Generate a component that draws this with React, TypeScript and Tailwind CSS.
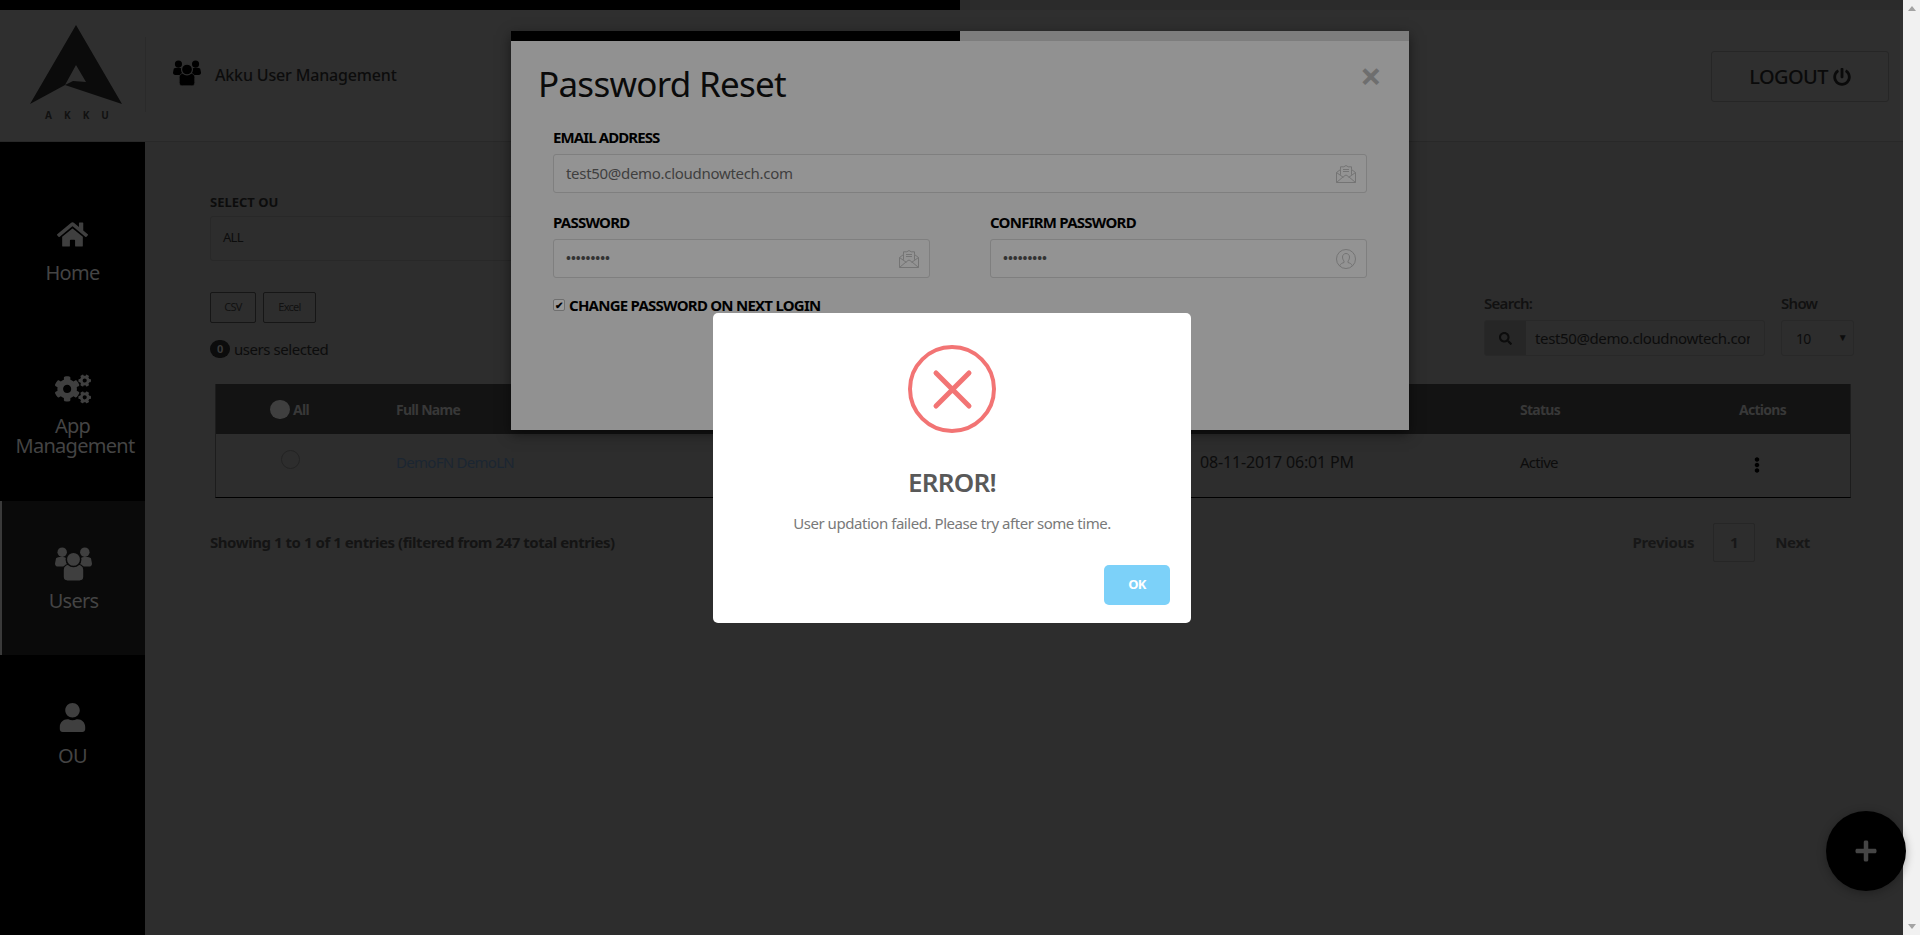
import { FaCogs, FaEllipsisV, FaHome, FaPlus, FaPowerOff, FaSearch, FaUser } from "react-icons/fa";

function UsersGlyph({ className, cut }: { className: string; cut: string }) {
  return (
    <svg viewBox="0 0 36 33" className={className} fill="currentColor">
      <circle cx="7" cy="5" r="4.6" />
      <circle cx="29" cy="5" r="4.6" />
      <path d="M1 11c1.500-1.600 9-1.600 10 0l1 8H3c-2 0-3-1-3-3z" />
      <path d="M35 11c-1.500-1.600-9-1.600-10 0l-1 8h9c2 0 3-1 3-3z" />
      <path d="M8 22c0-4 4-6 10-6s10 2 10 6v7c0 3-2 4-4 4H12c-2 0-4-1-4-4z" stroke={cut} strokeWidth="1" />
      <circle cx="18" cy="12" r="7" stroke={cut} strokeWidth="1.500" />
    </svg>
  );
}

function MailIcon() {
  return (
    <svg viewBox="0 0 20 18" className="h-[18px] w-[20px]" fill="none" stroke="#747474" strokeWidth="1">
      <path d="M.5 7.500v10h19v-10L15.500 4.500V1.800h-3.300L10 .5 7.800 1.800H4.500v2.700z" />
      <path d="M.5 7.500L7.500 12.500M19.500 7.500L12.500 12.500M.5 17.500L7.500 11.500 10 10l2.500 1.500 7 6M4.500 4.500V9.800M15.500 4.500V9.800M7 4.500h6M7 6.500h6" />
    </svg>
  );
}

function PersonIcon() {
  return (
    <svg viewBox="0 0 20 20" className="h-[20px] w-[20px]" fill="none" stroke="#747474" strokeWidth="1">
      <circle cx="10" cy="10" r="9.500" />
      <path d="M3.500 17c1-2.500 3-3 4.500-3.500v-1.500c-1-1-1.500-2.500-1.500-4 0-2 1.500-3.500 3.500-3.500s3.500 1.500 3.500 3.500c0 1.500-.5 3-1.500 4v1.500c1.500.5 3.500 1 4.500 3.500" />
    </svg>
  );
}

function NavItem({
  icon,
  label,
  active,
  height,
  shift = "",
  gap = "mt-[9px]",
}: {
  icon: React.ReactNode;
  label: React.ReactNode;
  active?: boolean;
  height: string;
  shift?: string;
  gap?: string;
}) {
  return (
    <div
      className={`flex flex-col items-center justify-center ${height} ${shift} ${
        active ? "border-l-2 border-[#3a3a3a] bg-[#0a0a0a]" : ""
      }`}
    >
      {icon}
      <div className={`${gap} text-center text-[20px] leading-[20px] text-[#444444]`}>{label}</div>
    </div>
  );
}

function ModalInput({ value, icon, secret }: { value: string; icon: React.ReactNode; secret?: boolean }) {
  return (
    <div className="flex h-[39px] items-center justify-between rounded-[3px] border border-[#7f7f7f] bg-[#939393] pl-[12px] pr-[10px]">
      <span className={secret ? "text-[13px] font-bold tracking-[0] text-[#333333]" : "text-[15px] tracking-[-0.02em] text-[#3f3f3f]"}>{value}</span>
      {icon}
    </div>
  );
}

export default function App() {
  return (
    <div className="relative flex h-[935px] w-[1920px] overflow-hidden bg-[#f1f1f1] font-['Noto_Sans','Open_Sans',sans-serif] tracking-[-0.045em]">
      {/* Page */}
      <div className="relative flex w-[1903px] flex-col bg-[#2d2d2d]">
        <div className="flex h-[10px] shrink-0">
          <div className="w-[960px] bg-black" />
          <div className="flex-1 bg-[#2b2b2b]" />
        </div>

        {/* Header */}
        <header className="flex h-[132px] shrink-0 items-start border-b border-[#282828] bg-[#2f2f2f]">
          <div className="flex h-[131px] w-[145px] flex-col items-center pt-[15px]">
            <svg viewBox="0 0 92 79" className="ml-[7px] h-[79px] w-[92px]">
              <path d="M46 0L92 79 35 60 0 79zM46 40L56 57 43 56 35 60z" fill="#0b0b0b" fillRule="evenodd" />
            </svg>
            <div className="ml-[7px] mt-[4px] pl-[14px] text-[10px] font-bold leading-[14px] tracking-[12px] text-[#111111]">AKKU</div>
          </div>
          <div className="mt-[27px] h-[75px] border-l border-[#2a2a2a]" />
          <div className="ml-[27px] mt-[50px] flex items-start">
            <UsersGlyph className="h-[26px] w-[28px] text-black" cut="#2f2f2f" />
            <span className="ml-[14px] mt-[3px] text-[16px] font-medium leading-[24px] tracking-[-0.01em] text-[#0c0c0c]">Akku User Management</span>
          </div>
          <button className="ml-auto mr-[14px] mt-[41px] flex h-[51px] w-[178px] items-center justify-center gap-[5px] rounded-[3px] border border-[#262626] text-[20px] font-medium tracking-[-0.03em] text-[#0a0a0a]">
            LOGOUT <FaPowerOff className="text-[18px]" />
          </button>
        </header>

        <div className="flex flex-1">
          {/* Sidebar */}
          <aside className="w-[145px] shrink-0 bg-black pt-[35px]">
            <NavItem
              height="h-[154px]"
              shift="pb-[6px]"
              gap="mt-[13px]"
              icon={<FaHome className="text-[31px] text-[#3f3f3f]" />}
              label="Home"
            />
            <NavItem
              height="h-[170px]"
              shift="pb-[5px]"
              icon={<FaCogs className="text-[36px] text-[#3f3f3f]" />}
              label={
                <>
                  App
                  <span className="ml-[5px] block">Management</span>
                </>
              }
            />
            <NavItem
              active
              height="h-[154px]"
              icon={<UsersGlyph className="h-[36px] w-[37px] text-[#3f3f3f]" cut="#0a0a0a" />}
              label="Users"
            />
            <NavItem
              height="h-[154px]"
              shift="pt-[5px]"
              gap="mt-[14px]"
              icon={<FaUser className="text-[29px] text-[#3f3f3f]" />}
              label="OU"
            />
          </aside>

          {/* Content */}
          <main className="min-w-0 flex-1 pl-[65px] pr-[49px] pt-[53px]">
            <div className="text-[13px] font-bold leading-[14px] tracking-[0] text-[#0c0c0c]">SELECT OU</div>
            <div className="mt-[7px] flex h-[45px] w-[560px] items-center rounded-[3px] border border-[#282828] pb-[2px] pl-[12px] text-[13px] text-[#0c0c0c]">ALL</div>

            <div className="mt-[31px] flex items-start justify-between">
              <div>
                <div className="flex gap-[7px]">
                  <button className="h-[31px] w-[46px] rounded-[2px] border border-[#161616] text-[11px] text-[#111111]">CSV</button>
                  <button className="h-[31px] w-[53px] rounded-[2px] border border-[#161616] text-[11px] text-[#111111]">Excel</button>
                </div>
                <div className="mt-[17px] flex items-center gap-[4px] text-[15px] leading-[18px] tracking-[-0.03em] text-[#0c0c0c]">
                  <span className="flex h-[18px] w-[20px] items-center justify-center rounded-full bg-[#0c0c0c] text-[11px] font-bold text-[#3a3a3a]">0</span>
                  users selected
                </div>
              </div>
              <div className="mr-[0px] mt-[1px] flex gap-[16px]">
                <div>
                  <div className="text-[15px] font-semibold leading-[20px] text-[#111111]">Search:</div>
                  <div className="mt-[7px] flex h-[36px] w-[281px] overflow-hidden rounded-[3px] border border-[#282828]">
                    <div className="flex w-[41px] items-center justify-center bg-[#262626]">
                      <FaSearch className="text-[13px] text-[#0c0c0c]" />
                    </div>
                    <div className="w-[224px] overflow-hidden whitespace-nowrap pl-[9px] text-[15px] leading-[34px] tracking-[-0.025em] text-[#0c0c0c]">test50@demo.cloudnowtech.com</div>
                  </div>
                </div>
                <div>
                  <div className="text-[15px] font-semibold leading-[20px] text-[#111111]">Show</div>
                  <div className="relative mt-[7px] flex h-[36px] w-[73px] items-center rounded-[3px] border border-[#282828] pl-[14px] text-[14px] text-[#0c0c0c]">
                    10
                    <span className="absolute right-[6px] top-[9px] text-[10px] text-[#0c0c0c]">▼</span>
                  </div>
                </div>
              </div>
            </div>

            {/* Table */}
            <div className="ml-[5px] mr-[3px] mt-[26px] border-b border-r border-l border-b-black border-l-[#1d1d1d] border-r-[#1d1d1d]">
              <div className="grid h-[50px] grid-cols-[180px_804px_320px_219px_1fr] items-center bg-[#131313] text-[14px] font-bold text-[#383838]">
                <div className="flex items-center pl-[54px]">
                  <span className="h-[19px] w-[20px] rounded-full bg-[#3f3f3f]" />
                  <span className="ml-[3px]">All</span>
                </div>
                <div>Full Name</div>
                <div />
                <div>Status</div>
                <div>Actions</div>
              </div>
              <div className="grid h-[63px] grid-cols-[180px_804px_320px_219px_1fr] pt-[18px] text-[15px] leading-[20px] text-[#0c0c0c]">
                <div className="pl-[65px]">
                  <span className="mt-[-2px] block h-[19px] w-[19px] rounded-full border border-[#232323]" />
                </div>
                <div className="text-[#1b2632]">DemoFN DemoLN</div>
                <div className="text-[16px] tracking-[-0.01em]">08-11-2017 06:01 PM</div>
                <div>Active</div>
                <div className="pl-[10px] pt-[5px]">
                  <FaEllipsisV className="text-[16px] text-black" />
                </div>
              </div>
            </div>

            {/* Footer of table */}
            <div className="mt-[24px] flex items-center justify-between">
              <div className="text-[15px] font-bold leading-[40px] tracking-[-0.03em] text-[#141414]">Showing 1 to 1 of 1 entries (filtered from 247 total entries)</div>
              <div className="mr-[44px] flex items-center text-[15px] font-bold tracking-[-0.02em] text-[#171717]">
                <span>Previous</span>
                <span className="ml-[19px] flex h-[39px] w-[42px] items-center justify-center rounded-[2px] border border-[#262626]">1</span>
                <span className="ml-[20px]">Next</span>
              </div>
            </div>
          </main>
        </div>

        {/* Password modal */}
        <div className="absolute left-[511px] top-[31px] h-[399px] w-[898px] bg-[#919191] shadow-[0_4px_12px_rgba(0,0,0,0.5)]">
          <div className="flex h-[10px]">
            <div className="w-[449px] bg-black" />
            <div className="flex-1 bg-[#7d7d7d]" />
          </div>
          <div className="relative px-[42px]">
            <h2 className="ml-[-15px] mt-[21px] text-[35px] font-normal leading-[44px] text-[#0a0a0a]">Password Reset</h2>
            <span className="absolute right-[28px] top-[-7px] text-[38px] font-bold leading-[40px] text-[#6e6e6e]">×</span>
            <label className="mt-[21px] block text-[15px] font-bold leading-[20px] tracking-[-0.06em] text-black">EMAIL ADDRESS</label>
            <div className="mt-[7px]">
              <ModalInput value="test50@demo.cloudnowtech.com" icon={<MailIcon />} />
            </div>
            <div className="mt-[19px] grid grid-cols-2 gap-x-[60px]">
              <div>
                <label className="block text-[15px] font-bold leading-[20px] tracking-[-0.05em] text-black">PASSWORD</label>
                <div className="mt-[7px]">
                  <ModalInput secret value="•••••••••" icon={<MailIcon />} />
                </div>
              </div>
              <div>
                <label className="block text-[15px] font-bold leading-[20px] tracking-[-0.05em] text-black">CONFIRM PASSWORD</label>
                <div className="mt-[7px]">
                  <ModalInput secret value="•••••••••" icon={<PersonIcon />} />
                </div>
              </div>
            </div>
            <div className="mt-[15px] flex items-center gap-[4px] text-[15px] font-bold leading-[24px] tracking-[-0.05em] text-black">
              <span className="flex h-[12px] w-[12px] items-center justify-center rounded-[2px] border border-[#6f6f6f] bg-[#9a9a9a] text-[10px] leading-none">✔</span>
              CHANGE PASSWORD ON NEXT LOGIN
            </div>
          </div>
        </div>

        {/* Add button */}
        <button className="absolute left-[1826px] top-[811px] flex h-[80px] w-[80px] items-center justify-center rounded-full bg-black shadow-[0_2px_10px_rgba(0,0,0,0.3)]">
          <FaPlus className="text-[24px] text-[#454545]" />
        </button>

        {/* Error alert */}
        <div className="absolute left-[713px] top-[313px] flex h-[310px] w-[478px] flex-col items-center rounded-[5px] bg-white">
          <svg viewBox="0 0 88 88" className="mt-[32px] h-[88px] w-[88px]" fill="none" stroke="#f27474" strokeWidth="4" strokeLinecap="round">
            <circle cx="44" cy="44" r="42" />
            <path d="M28 28l33 33M61 28L28 61" strokeWidth="5" />
          </svg>
          <div className="mt-[31px] text-[26px] font-semibold leading-[36px] text-[#595959]">ERROR!</div>
          <div className="mt-[12px] text-[15px] leading-[22px] tracking-[-0.03em] text-[#797979]">User updation failed. Please try after some time.</div>
          <button className="ml-auto mr-[21px] mt-[31px] h-[40px] w-[66px] rounded-[5px] bg-[#7cd1f9] text-[13px] font-bold text-white">OK</button>
        </div>
      </div>

      {/* Scrollbar */}
      <div className="flex w-[17px] flex-col items-center justify-between bg-[#f1f1f1] py-[6px]">
        <span className="h-0 w-0 border-x-[4px] border-b-[5px] border-x-transparent border-b-[#a3a3a3]" />
        <span className="h-0 w-0 border-x-[4px] border-t-[5px] border-x-transparent border-t-[#a3a3a3]" />
      </div>
    </div>
  );
}
